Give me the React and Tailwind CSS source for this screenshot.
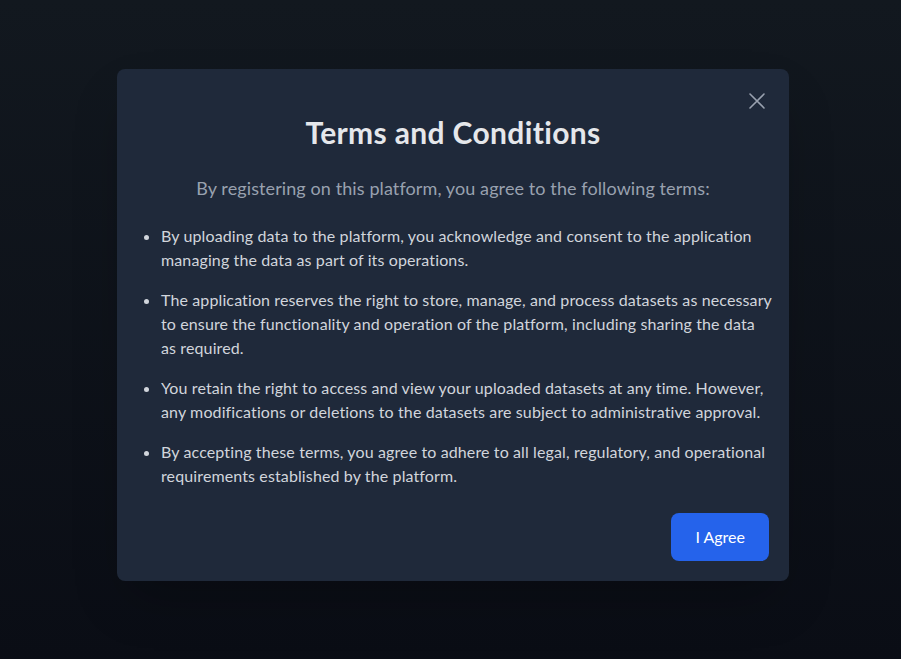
import React from "react";

export default function App() {
  const items = [
    ["By uploading data to the platform, you acknowledge and consent to the application", "managing the data as part of its operations."],
    ["The application reserves the right to store, manage, and process datasets as necessary", "to ensure the functionality and operation of the platform, including sharing the data", "as required."],
    ["You retain the right to access and view your uploaded datasets at any time. However,", "any modifications or deletions to the datasets are subject to administrative approval."],
    ["By accepting these terms, you agree to adhere to all legal, regulatory, and operational", "requirements established by the platform."],
  ];
  return (
    <div
      className="w-[901px] h-[659px] flex items-start justify-start pl-[117px] pt-[69px] bg-gradient-to-b from-[#12181f] to-[#0a0d15]"
      style={{ fontFamily: "Lato, 'Noto Sans', sans-serif" }}
    >
      <div className="relative w-[672px] h-[512px] bg-[#1f293a] rounded-lg shadow-2xl px-5 pt-[45px] pb-5 flex flex-col">
        <button className="absolute top-[18px] right-[18px] text-gray-400">
          <svg width="28" height="28" viewBox="0 0 28 28" fill="none" stroke="currentColor" strokeWidth="1.6" strokeLinecap="round">
            <path d="M7 7l14 14M21 7L7 21" />
          </svg>
        </button>
        <h2 className="text-center text-[30px] leading-9 font-bold text-gray-200 tracking-[0.35px]">Terms and Conditions</h2>
        <p className="mt-6 text-center text-lg leading-7 text-gray-400 tracking-[0.1px]">
          By registering on this platform, you agree to the following terms:
        </p>
        <ul className="mt-[22px] list-disc pl-6 space-y-4 text-base leading-6 text-gray-300 marker:text-gray-300 tracking-[0.12px]">
          {items.map((lines, i) => (
            <li key={i} className="whitespace-nowrap">
              {lines.map((l, j) => (
                <React.Fragment key={j}>
                  {j > 0 && <br />}
                  {l}
                </React.Fragment>
              ))}
            </li>
          ))}
        </ul>
        <div className="mt-auto flex justify-end">
          <button className="h-12 px-6 rounded-lg bg-[#2563eb] text-white text-base">I Agree</button>
        </div>
      </div>
    </div>
  );
}
